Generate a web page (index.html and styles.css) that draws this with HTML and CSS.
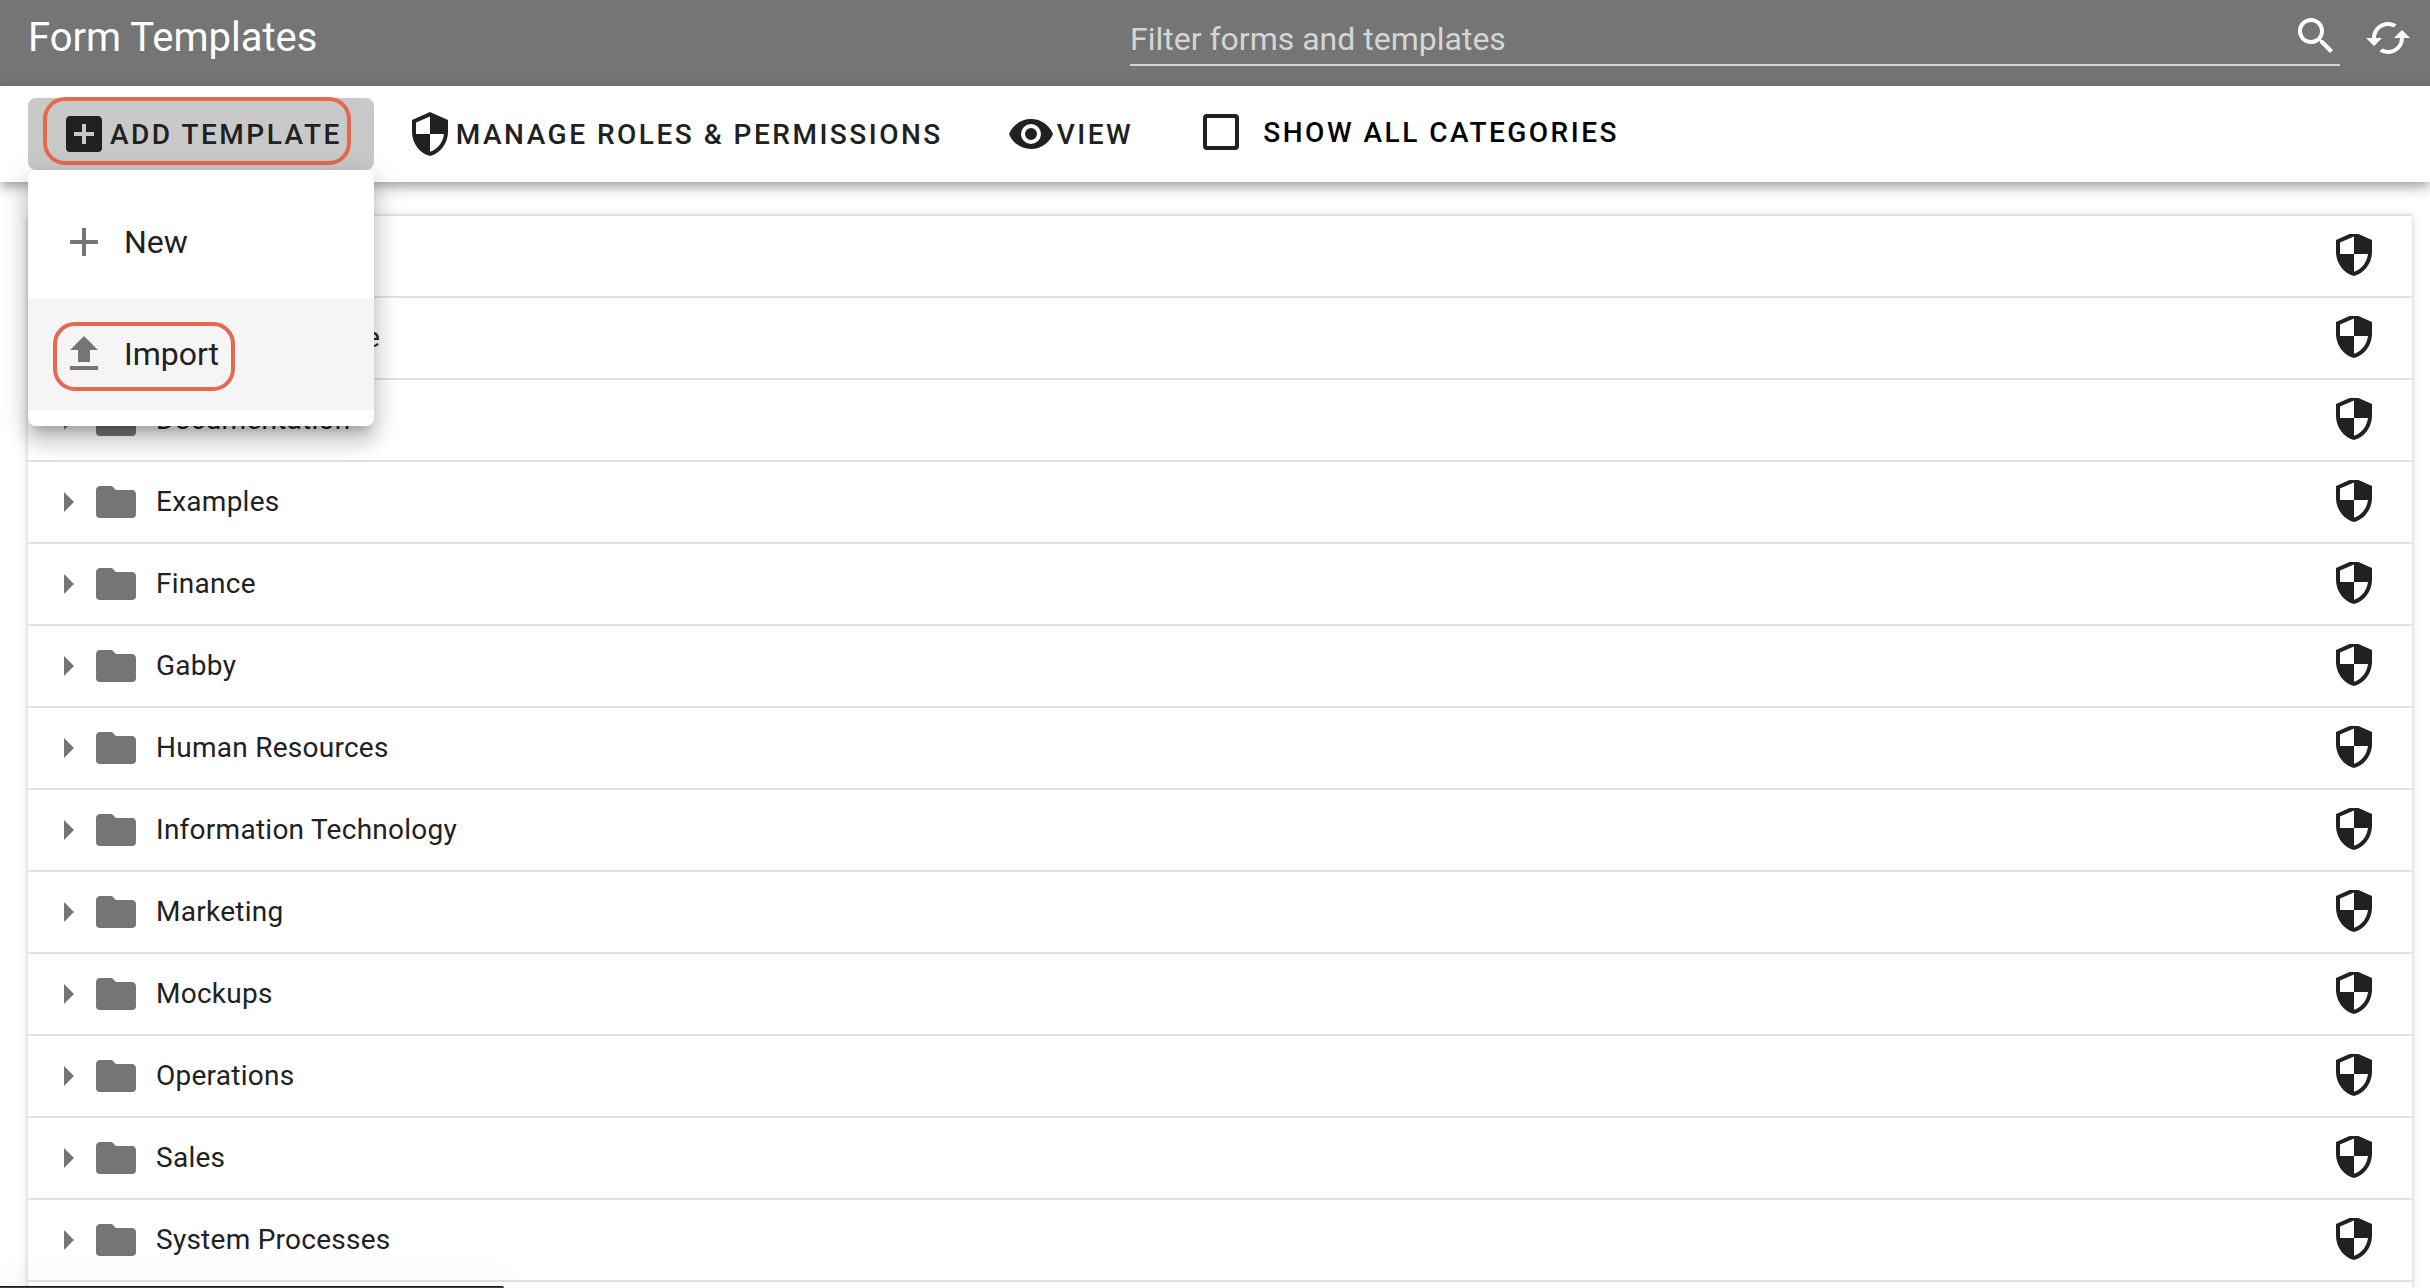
FILE: index.html
```html
<!DOCTYPE html>
<html lang="en">
<head>
  <meta charset="UTF-8">
  <meta name="viewport" content="width=device-width, initial-scale=1.0">
  <title>Form Templates</title>
  <link rel="stylesheet" href="styles.css">
</head>
<body>

<svg class="sprite" aria-hidden="true">
  <symbol id="plus-box" viewBox="0 0 24 24"><path d="M17,13H13V17H11V13H7V11H11V7H13V11H17M19,3H5C3.89,3 3,3.89 3,5V19A2,2 0 0,0 5,21H19A2,2 0 0,0 21,19V5C21,3.89 20.1,3 19,3Z"/></symbol>
  <symbol id="shield" viewBox="0 0 24 24"><path d="M12,1L3,5V11C3,16.55 6.84,21.74 12,23C17.16,21.74 21,16.55 21,11V5L12,1M12,12H19C18.47,16.11 15.72,19.78 12,20.92V12H5V6.3L12,3.19V12Z"/></symbol>
  <symbol id="shield-row" viewBox="0 2 24 22"><path d="M12,1L3,5V11C3,16.55 6.84,21.74 12,23C17.16,21.74 21,16.55 21,11V5L12,1M12,12H19C18.47,16.11 15.72,19.78 12,20.92V12H5V6.3L12,3.19V12Z"/></symbol>
  <symbol id="eye" viewBox="0 0 24 24"><path d="M12,9A3,3 0 0,0 9,12A3,3 0 0,0 12,15A3,3 0 0,0 15,12A3,3 0 0,0 12,9M12,17A5,5 0 0,1 7,12A5,5 0 0,1 12,7A5,5 0 0,1 17,12A5,5 0 0,1 12,17M12,4.5C7,4.5 2.73,7.61 1,12C2.73,16.39 7,19.5 12,19.5C17,19.5 21.27,16.39 23,12C21.27,7.61 17,4.5 12,4.5Z"/></symbol>
  <symbol id="plus" viewBox="0 0 24 24"><path d="M19,13H13V19H11V13H5V11H11V5H13V11H19V13Z"/></symbol>
  <symbol id="upload" viewBox="0 0 24 24"><path d="M9,16V10H5L12,3L19,10H15V16H9M5,20V18H19V20H5Z"/></symbol>
  <symbol id="magnify" viewBox="0 0 24 24"><path d="M9.5,3A6.5,6.5 0 0,1 16,9.5C16,11.11 15.41,12.59 14.44,13.73L14.71,14H15.5L20.5,19L19,20.5L14,15.5V14.71L13.73,14.44C12.59,15.41 11.11,16 9.5,16A6.5,6.5 0 0,1 3,9.5A6.5,6.5 0 0,1 9.5,3M9.5,5C7,5 5,7 5,9.5C5,12 7,14 9.5,14C12,14 14,12 14,9.5C14,7 12,5 9.5,5Z"/></symbol>
  <symbol id="cached" viewBox="0 0 24 24"><path d="M19,8L15,12H18A6,6 0 0,1 12,18C11,18 10.03,17.75 9.2,17.3L7.74,18.76C8.97,19.54 10.43,20 12,20A8,8 0 0,0 20,12H23M6,12A6,6 0 0,1 12,6C13,6 13.97,6.25 14.8,6.7L16.26,5.24C15.03,4.46 13.57,4 12,4A8,8 0 0,0 4,12H1L5,16L9,12"/></symbol>
  <symbol id="caret" viewBox="0 0 24 24"><path d="M10,17L15,12L10,7V17Z"/></symbol>
  <symbol id="folder" viewBox="0 0 24 24"><path d="M10,4H4C2.89,4 2,4.89 2,6V18A2,2 0 0,0 4,20H20A2,2 0 0,0 22,18V8C22,6.89 21.1,6 20,6H12L10,4Z"/></symbol>
</svg>

<header class="app-bar">
  <h1 class="title">Form Templates</h1>
  <div class="search">
    <input type="text" class="search-input" placeholder="Filter forms and templates" aria-label="Filter forms and templates">
    <svg class="icon"><use href="#magnify"/></svg>
  </div>
  <button class="refresh" aria-label="Refresh"><svg class="icon"><use href="#cached"/></svg></button>
</header>

<nav class="toolbar">
  <div class="dropdown">
    <button class="btn active marked"><svg class="icon"><use href="#plus-box"/></svg>Add Template</button>
    <div class="menu">
      <button class="menu-item"><svg class="icon"><use href="#plus"/></svg>New</button>
      <button class="menu-item hover"><svg class="icon"><use href="#upload"/></svg><span class="marked">Import</span></button>
    </div>
  </div>
  <button class="btn"><svg class="icon"><use href="#shield"/></svg>Manage Roles &amp; Permissions</button>
  <button class="btn"><svg class="icon"><use href="#eye"/></svg>View</button>
  <label class="check"><input type="checkbox">Show all categories</label>
</nav>

<main class="content">
  <ul class="categories" id="categories"></ul>
</main>

<div class="status-bubble"></div>

<script>
  const categories = [
    'Admin',
    'Customer Service',
    'Documentation',
    'Examples',
    'Finance',
    'Gabby',
    'Human Resources',
    'Information Technology',
    'Marketing',
    'Mockups',
    'Operations',
    'Sales',
    'System Processes'
  ];

  const list = document.getElementById('categories');

  categories.forEach(name => {
    const row = document.createElement('li');
    row.className = 'category';
    row.innerHTML = `
      <button class="icon-btn" aria-label="Expand ${name}"><svg class="icon"><use href="#caret"/></svg></button>
      <svg class="icon"><use href="#folder"/></svg>
      <span class="name">${name}</span>
      <button class="icon-btn roles" aria-label="Permissions for ${name}"><svg class="icon short"><use href="#shield-row"/></svg></button>`;
    list.appendChild(row);
  });
</script>
</body>
</html>
```
FILE: styles.css
```css
* {
  box-sizing: border-box;
}

html, body {
  height: 100%;
  margin: 0;
}

body {
  display: flex;
  flex-direction: column;
  overflow: hidden;
  font-family: Roboto, sans-serif;
  font-size: 28px;
  color: #212121;
  background: #fff;
}

button {
  font: inherit;
  color: inherit;
  border: 0;
  padding: 0;
  background: none;
  cursor: pointer;
}

.sprite {
  display: none;
}

.icon {
  display: block;
  flex: none;
  width: 48px;
  height: 48px;
  fill: currentColor;
}

.icon.short {
  height: 44px;
}

/* header */
.app-bar {
  display: flex;
  flex: none;
  height: 86px;
  padding: 0 18px 0 28px;
  color: #fff;
  background: #757575;
}

.title {
  flex: 1;
  margin: 0;
  font-size: 40px;
  font-weight: 400;
  line-height: 76px;
}

.search {
  display: flex;
  align-items: center;
  width: calc(50% + 18px);
  height: 66px;
  padding-top: 14px;
  border-bottom: 2px solid #d6d6d6;
}

.search .icon {
  margin-bottom: 6px;
}

.search-input {
  flex: 1;
  height: 48px;
  padding: 0;
  border: 0;
  outline: 0;
  font: inherit;
  font-size: 32px;
  color: #fff;
  background: none;
}

.search-input::placeholder {
  color: #d6d6d6;
  opacity: 1;
}

.refresh {
  height: 76px;
  margin-left: 24px;
}

/* toolbar */
.toolbar {
  position: relative;
  z-index: 1;
  display: flex;
  flex: none;
  align-items: center;
  height: 96px;
  padding: 0 28px;
  background: #fff;
  box-shadow: 0 4px 8px -2px rgba(0, 0, 0, .2), 0 8px 10px rgba(0, 0, 0, .14), 0 2px 20px rgba(0, 0, 0, .12);
}

.dropdown {
  position: relative;
}

.btn, .check {
  display: flex;
  align-items: center;
  gap: 2px;
  height: 72px;
  padding: 0 32px;
  border-radius: 8px;
  font-weight: 500;
  letter-spacing: 0.0892857143em;
  text-transform: uppercase;
  white-space: nowrap;
}

.btn.active {
  background: #c9c9c9;
}

.check {
  height: 68px;
  margin-bottom: 4px;
  color: #000;
}

.check input {
  appearance: none;
  width: 36px;
  height: 36px;
  margin: 0 22px 0 6px;
  border: 4px solid #212121;
  border-radius: 4px;
}

.menu {
  position: absolute;
  top: 100%;
  left: 0;
  width: 100%;
  padding: 16px 0;
  border-radius: 8px;
  background: #fff;
  box-shadow: 0 10px 10px -6px rgba(0, 0, 0, .2), 0 16px 20px 2px rgba(0, 0, 0, .14), 0 6px 28px 4px rgba(0, 0, 0, .12);
}

.menu-item {
  display: flex;
  align-items: center;
  gap: 16px;
  width: 100%;
  height: 112px;
  padding: 0 32px;
  font-size: 32px;
}

.menu-item .icon {
  color: #757575;
}

.menu-item.hover {
  background: #f5f5f5;
}

/* red outlines */
.marked {
  position: relative;
}

.marked::after {
  content: "";
  position: absolute;
  inset: -1px 23px 5px 15px;
  border: 4px solid #e4694f;
  border-radius: 22px;
}

.menu .marked::after {
  inset: -13px -16px -18px -71px;
}

/* category list */
.content {
  flex: 1;
  min-height: 0;
  padding: 32px 18px 0 28px;
}

.categories {
  min-height: 100%;
  margin: 0;
  padding: 0;
  list-style: none;
  border-top: 2px solid #e2e2e2;
  box-shadow: 0 6px 2px -4px rgba(0, 0, 0, .2), 0 4px 4px rgba(0, 0, 0, .14), 0 2px 10px rgba(0, 0, 0, .12);
}

.category {
  display: flex;
  align-items: center;
  height: 82px;
  padding: 0 34px 0 16px;
  border-bottom: 2px solid #e2e2e2;
}

.category .icon {
  color: #757575;
}

.category .name {
  flex: 1;
  margin-left: 16px;
  padding-bottom: 2px;
  letter-spacing: 0.009375em;
}

.category .roles .icon {
  color: #212121;
}

/* browser link bubble peeking in at the bottom */
.status-bubble {
  position: fixed;
  left: 0;
  bottom: 0;
  z-index: 2;
  width: 504px;
  height: 2px;
  border-top: 1px solid #1a1a1a;
  border-top-right-radius: 2px;
  background: #3f4143;
  box-shadow: 0 0 30px rgba(0, 0, 0, .35);
}
```
